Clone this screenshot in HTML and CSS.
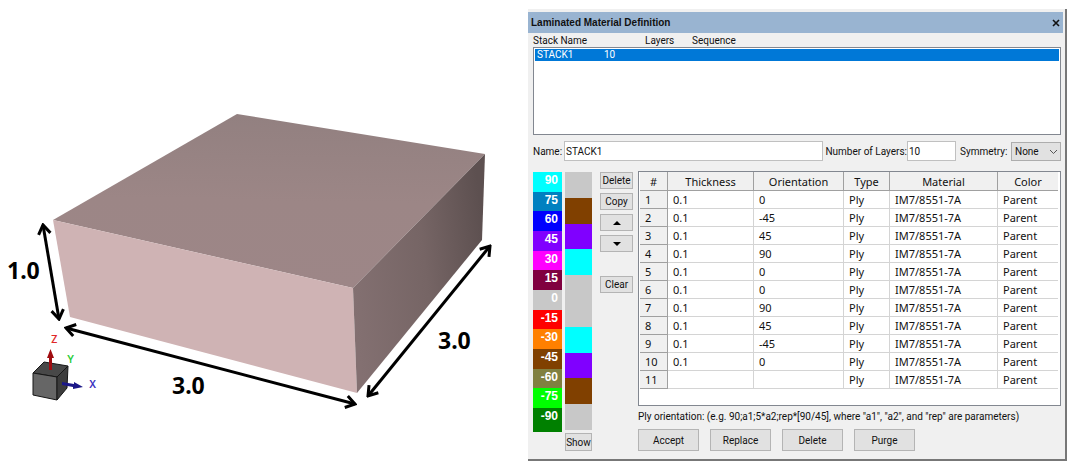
FILE: index.html
```html
<!DOCTYPE html>
<html lang="en">
<head>
<meta charset="utf-8">
<title>Laminated Material Definition</title>
<link rel="stylesheet" href="styles.css">
</head>
<body>
<main class="page">
  <figure class="scene">
    <svg class="scene-drawing" viewBox="0 0 528 475" role="img" aria-label="Block measuring 3.0 by 3.0 by 1.0">
      <defs>
        <linearGradient id="top" x1="0.55" y1="0" x2="0.5" y2="1">
          <stop offset="0" stop-color="#928080"/>
          <stop offset="0.5" stop-color="#9c8686"/>
          <stop offset="1" stop-color="#9d8687"/>
        </linearGradient>
        <linearGradient id="side" x1="0" y1="0.6" x2="1" y2="0.4">
          <stop offset="0" stop-color="#837071"/>
          <stop offset="0.55" stop-color="#766565"/>
          <stop offset="1" stop-color="#5d5050"/>
        </linearGradient>
        <marker id="tip" viewBox="0 0 14 16" refX="12" refY="8" markerWidth="14" markerHeight="16" markerUnits="userSpaceOnUse" orient="auto-start-reverse">
          <path d="M3 2 L12 8 L3 14" fill="none" stroke="#000" stroke-width="3"/>
        </marker>
      </defs>
      <polygon points="237,114 485,154 353,288 53,220" fill="url(#top)"/>
      <polygon points="53,220 353,288 357,393 70,317" fill="#cfb3b4"/>
      <polygon points="353,288 485,154 482,240 357,393" fill="url(#side)"/>
      <g stroke="#000" stroke-width="3">
        <line x1="43" y1="225" x2="59" y2="319" marker-start="url(#tip)" marker-end="url(#tip)"/>
        <line x1="66" y1="328" x2="355" y2="404" marker-start="url(#tip)" marker-end="url(#tip)"/>
        <line x1="368" y1="396" x2="490" y2="246" marker-start="url(#tip)" marker-end="url(#tip)"/>
      </g>
      <g class="dimension">
        <text x="7" y="279">1.0</text>
        <text x="172" y="394">3.0</text>
        <text x="438" y="349">3.0</text>
      </g>
      <g stroke="#161616" stroke-width="1" stroke-linejoin="round">
        <polygon points="33,373 44,362 68,366 57,377" fill="#484848"/>
        <polygon points="33,373 57,377 57,400 33,395" fill="#666"/>
        <polygon points="57,377 68,366 67,388 57,400" fill="#3c3c3c"/>
      </g>
      <path d="M49 370 V358 H47 L50.500 349 L54 358 H52 V370 Z" fill="#a00c10"/>
      <path d="M62 382 L74 384 V382 L83 387 L73 389 V387 L62 385 Z" fill="#1c1888"/>
      <g class="axis">
        <text x="51" y="343" fill="#e02828">Z</text>
        <text x="67" y="363" fill="#28cc38">Y</text>
        <text x="89" y="388" fill="#3a30c0">X</text>
      </g>
    </svg>
  </figure>

  <section class="dialog" aria-labelledby="dialog-title">
    <header class="titlebar">
      <h1 id="dialog-title" class="title">Laminated Material Definition</h1>
      <button class="close" type="button" aria-label="Close">
        <svg width="8" height="8" viewBox="0 0 8 8"><path d="M1 1 L7 7 M7 1 L1 7" stroke="#111" stroke-width="1.600"/></svg>
      </button>
    </header>
    <div class="content">
      <div class="stack-columns"><span>Stack Name</span><span>Layers</span><span>Sequence</span></div>
      <div class="stack-list" role="listbox" aria-label="Stacks">
        <div class="stack-item" role="option" aria-selected="true"><span>STACK1</span><span>10</span></div>
      </div>

      <div class="fields">
        <label class="name-label" for="name">Name:</label>
        <input class="text name-input" id="name" type="text" value="STACK1">
        <label class="layers-label" for="layers">Number of Layers:</label>
        <input class="text layers-input" id="layers" type="text" value="10">
        <label class="symmetry-label" for="symmetry">Symmetry:</label>
        <div class="combo">
          <select id="symmetry"><option>None</option></select>
          <svg class="chevron" width="9" height="6" viewBox="0 0 9 6"><path d="M1 1 L4.500 4.500 L8 1" fill="none" stroke="#555"/></svg>
        </div>
      </div>

      <div class="editor">
        <div class="legend">
          <span class="cyan">90</span><span class="teal">75</span><span class="blue">60</span><span class="violet">45</span><span class="magenta">30</span><span class="maroon">15</span><span class="gray">0</span><span class="red">-15</span><span class="orange">-30</span><span class="brown">-45</span><span class="olive">-60</span><span class="lime">-75</span><span class="green">-90</span>
        </div>
        <div class="preview">
          <div class="plies">
            <i class="gray"></i><i class="brown"></i><i class="violet"></i><i class="cyan"></i><i class="gray"></i><i class="gray"></i><i class="cyan"></i><i class="violet"></i><i class="brown"></i><i class="gray"></i>
          </div>
          <button class="btn show" type="button">Show</button>
        </div>
        <div class="tools">
          <button class="btn" type="button">Delete</button>
          <button class="btn" type="button">Copy</button>
          <button class="btn" type="button" aria-label="Move up"><svg width="8" height="4" viewBox="0 0 8 4"><path d="M0 4 L4 0 L8 4 Z"/></svg></button>
          <button class="btn" type="button" aria-label="Move down"><svg width="8" height="4" viewBox="0 0 8 4"><path d="M0 0 L4 4 L8 0 Z"/></svg></button>
          <button class="btn clear" type="button">Clear</button>
        </div>
        <div class="ply-panel">
          <div class="grid-box">
            <table class="plies-table">
              <colgroup><col class="c-num"><col class="c-thick"><col class="c-orient"><col class="c-type"><col class="c-mat"><col class="c-color"></colgroup>
              <thead><tr><th>#</th><th>Thickness</th><th>Orientation</th><th>Type</th><th>Material</th><th>Color</th></tr></thead>
              <tbody>
                <tr><th>1</th><td>0.1</td><td>0</td><td>Ply</td><td>IM7/8551-7A</td><td>Parent</td></tr>
                <tr><th>2</th><td>0.1</td><td>-45</td><td>Ply</td><td>IM7/8551-7A</td><td>Parent</td></tr>
                <tr><th>3</th><td>0.1</td><td>45</td><td>Ply</td><td>IM7/8551-7A</td><td>Parent</td></tr>
                <tr><th>4</th><td>0.1</td><td>90</td><td>Ply</td><td>IM7/8551-7A</td><td>Parent</td></tr>
                <tr><th>5</th><td>0.1</td><td>0</td><td>Ply</td><td>IM7/8551-7A</td><td>Parent</td></tr>
                <tr><th>6</th><td>0.1</td><td>0</td><td>Ply</td><td>IM7/8551-7A</td><td>Parent</td></tr>
                <tr><th>7</th><td>0.1</td><td>90</td><td>Ply</td><td>IM7/8551-7A</td><td>Parent</td></tr>
                <tr><th>8</th><td>0.1</td><td>45</td><td>Ply</td><td>IM7/8551-7A</td><td>Parent</td></tr>
                <tr><th>9</th><td>0.1</td><td>-45</td><td>Ply</td><td>IM7/8551-7A</td><td>Parent</td></tr>
                <tr><th>10</th><td>0.1</td><td>0</td><td>Ply</td><td>IM7/8551-7A</td><td>Parent</td></tr>
                <tr><th>11</th><td></td><td></td><td>Ply</td><td>IM7/8551-7A</td><td>Parent</td></tr>
              </tbody>
            </table>
          </div>
          <p class="hint">Ply orientation: (e.g. 90;a1;5*a2;rep*[90/45], where "a1", "a2", and "rep" are parameters)</p>
          <div class="actions">
            <button class="btn" type="button">Accept</button>
            <button class="btn" type="button">Replace</button>
            <button class="btn" type="button">Delete</button>
            <button class="btn" type="button">Purge</button>
          </div>
        </div>
      </div>
    </div>
  </section>
</main>
</body>
</html>
```
FILE: styles.css
```css
* { box-sizing: border-box; }
body {
  margin: 0;
  background: #fff;
  color: #111;
  font: 10px/13px "Roboto", sans-serif;
}
.page {
  display: grid;
  grid-template-columns: minmax(0, 528fr) minmax(0, 539fr);
  align-items: start;
  padding-right: 15px;
}

/* 3D view */
.scene { margin: 0; }
.scene-drawing { display: block; width: 100%; }
.dimension { font: 700 23px "Noto Sans", sans-serif; }
.axis { font: 600 10px "Inter", sans-serif; }

/* Dialog */
.dialog {
  margin-top: 9px;
  padding-top: 3px;
  background: #f0f0f0;
  border-right: 2px solid #777;
  border-bottom: 2px solid #777;
}
.titlebar {
  display: flex;
  align-items: center;
  justify-content: space-between;
  height: 21px;
  margin-right: 2px;
  padding: 0 3px;
  background: #99b4d1;
}
.title { margin: 0; font: bold 10px/21px "Liberation Sans", sans-serif; }
.close { display: flex; padding: 0; border: 0; background: none; }
.content { padding: 1px 4px 8px 5px; }

.stack-columns, .stack-item { display: grid; grid-template-columns: 112px 47px 1fr; }
.stack-list {
  height: 88px;
  padding: 1px;
  background: #fff;
  border: 1px solid #828790;
}
.stack-item {
  grid-template-columns: 67px 1fr;
  padding-left: 2px;
  line-height: 12px;
  background: #0078d7;
  color: #fff;
}

.fields { display: flex; align-items: center; padding-top: 6px; }
.name-label { flex: 0 0 31px; }
.text {
  height: 20px;
  min-width: 0;
  padding: 0 1px;
  border: 1px solid #c0c0c0;
  background: #fff;
  color: #111;
  font: inherit;
}
.name-input { flex: 1; }
.layers-label { padding-left: 2px; white-space: nowrap; }
.layers-input { flex: 0 0 49px; }
.symmetry-label { flex: 0 0 55px; padding-left: 4px; white-space: nowrap; }
.combo { position: relative; flex: 0 0 50px; }
.combo select {
  display: block;
  width: 100%;
  height: 19px;
  padding: 0 3px;
  appearance: none;
  border: 1px solid #adadad;
  border-radius: 0;
  background: #e1e1e1;
  color: #111;
  font: inherit;
}
.chevron { position: absolute; right: 3px; top: 7px; pointer-events: none; }

.btn {
  display: flex;
  align-items: center;
  justify-content: center;
  height: 17px;
  padding: 0;
  border: 1px solid #b4b4b4;
  background: #e1e1e1;
  color: #111;
  font: inherit;
}

/* Ply editor */
.editor {
  display: grid;
  grid-template-columns: 29px 27px 33px minmax(0, 1fr);
  align-items: start;
  padding-top: 10px;
}
.legend {
  display: grid;
  grid-template-rows: repeat(12, 1fr) 24px;
  height: 260px;
  margin-top: 1px;
}
.legend span {
  padding-right: 4px;
  color: #fff;
  font: bold 12px/16px "Liberation Sans", sans-serif;
  text-align: right;
}
.preview { margin: 1px 0 0 3px; width: 27px; }
.plies { display: grid; grid-template-rows: repeat(10, 1fr); height: 258px; }
.show { width: 100%; height: 18px; margin-top: 3px; }
.tools { display: grid; gap: 4px; margin: 1px 0 0 11px; width: 33px; }
.clear { margin-top: 20px; }
.ply-panel { margin-left: 16px; }
.cyan { background: #00ffff; }
.teal { background: #0080c0; }
.blue { background: #0000ff; }
.violet { background: #8000ff; }
.magenta { background: #ff00ff; }
.maroon { background: #800040; }
.gray { background: #c8c8c8; }
.red { background: #ff0000; }
.orange { background: #ff8000; }
.brown { background: #804000; }
.olive { background: #808040; }
.lime { background: #00ff00; }
.green { background: #008000; }

.grid-box {
  height: 235px;
  padding-right: 2px;
  padding-left: 1px;
  background: #fff;
  border: 1px solid #828790;
}
.plies-table {
  width: 100%;
  table-layout: fixed;
  border-collapse: separate;
  border-spacing: 0;
  font: 11px/17px "Noto Sans", sans-serif;
}
.c-num { width: 28px; }
.c-thick { width: 86px; }
.c-orient { width: 90px; }
.c-type { width: 46px; }
.c-mat { width: 108px; }
.plies-table th, .plies-table td {
  height: 18px;
  padding: 0 0 0 5px;
  border: 0 solid #d4d4d4;
  border-width: 0 1px 1px 0;
  font-weight: 400;
  text-align: left;
}
.plies-table th { background: #f0f0f0; border-color: #a0a0a0; }
.plies-table thead th { height: 19px; padding: 0; text-align: center; }
.plies-table tr > :last-child { border-right: 0; }
.hint { margin: 4px 0 6px; white-space: nowrap; }
.actions { display: flex; gap: 11px; }
.actions .btn { width: 61px; height: 22px; }
```
